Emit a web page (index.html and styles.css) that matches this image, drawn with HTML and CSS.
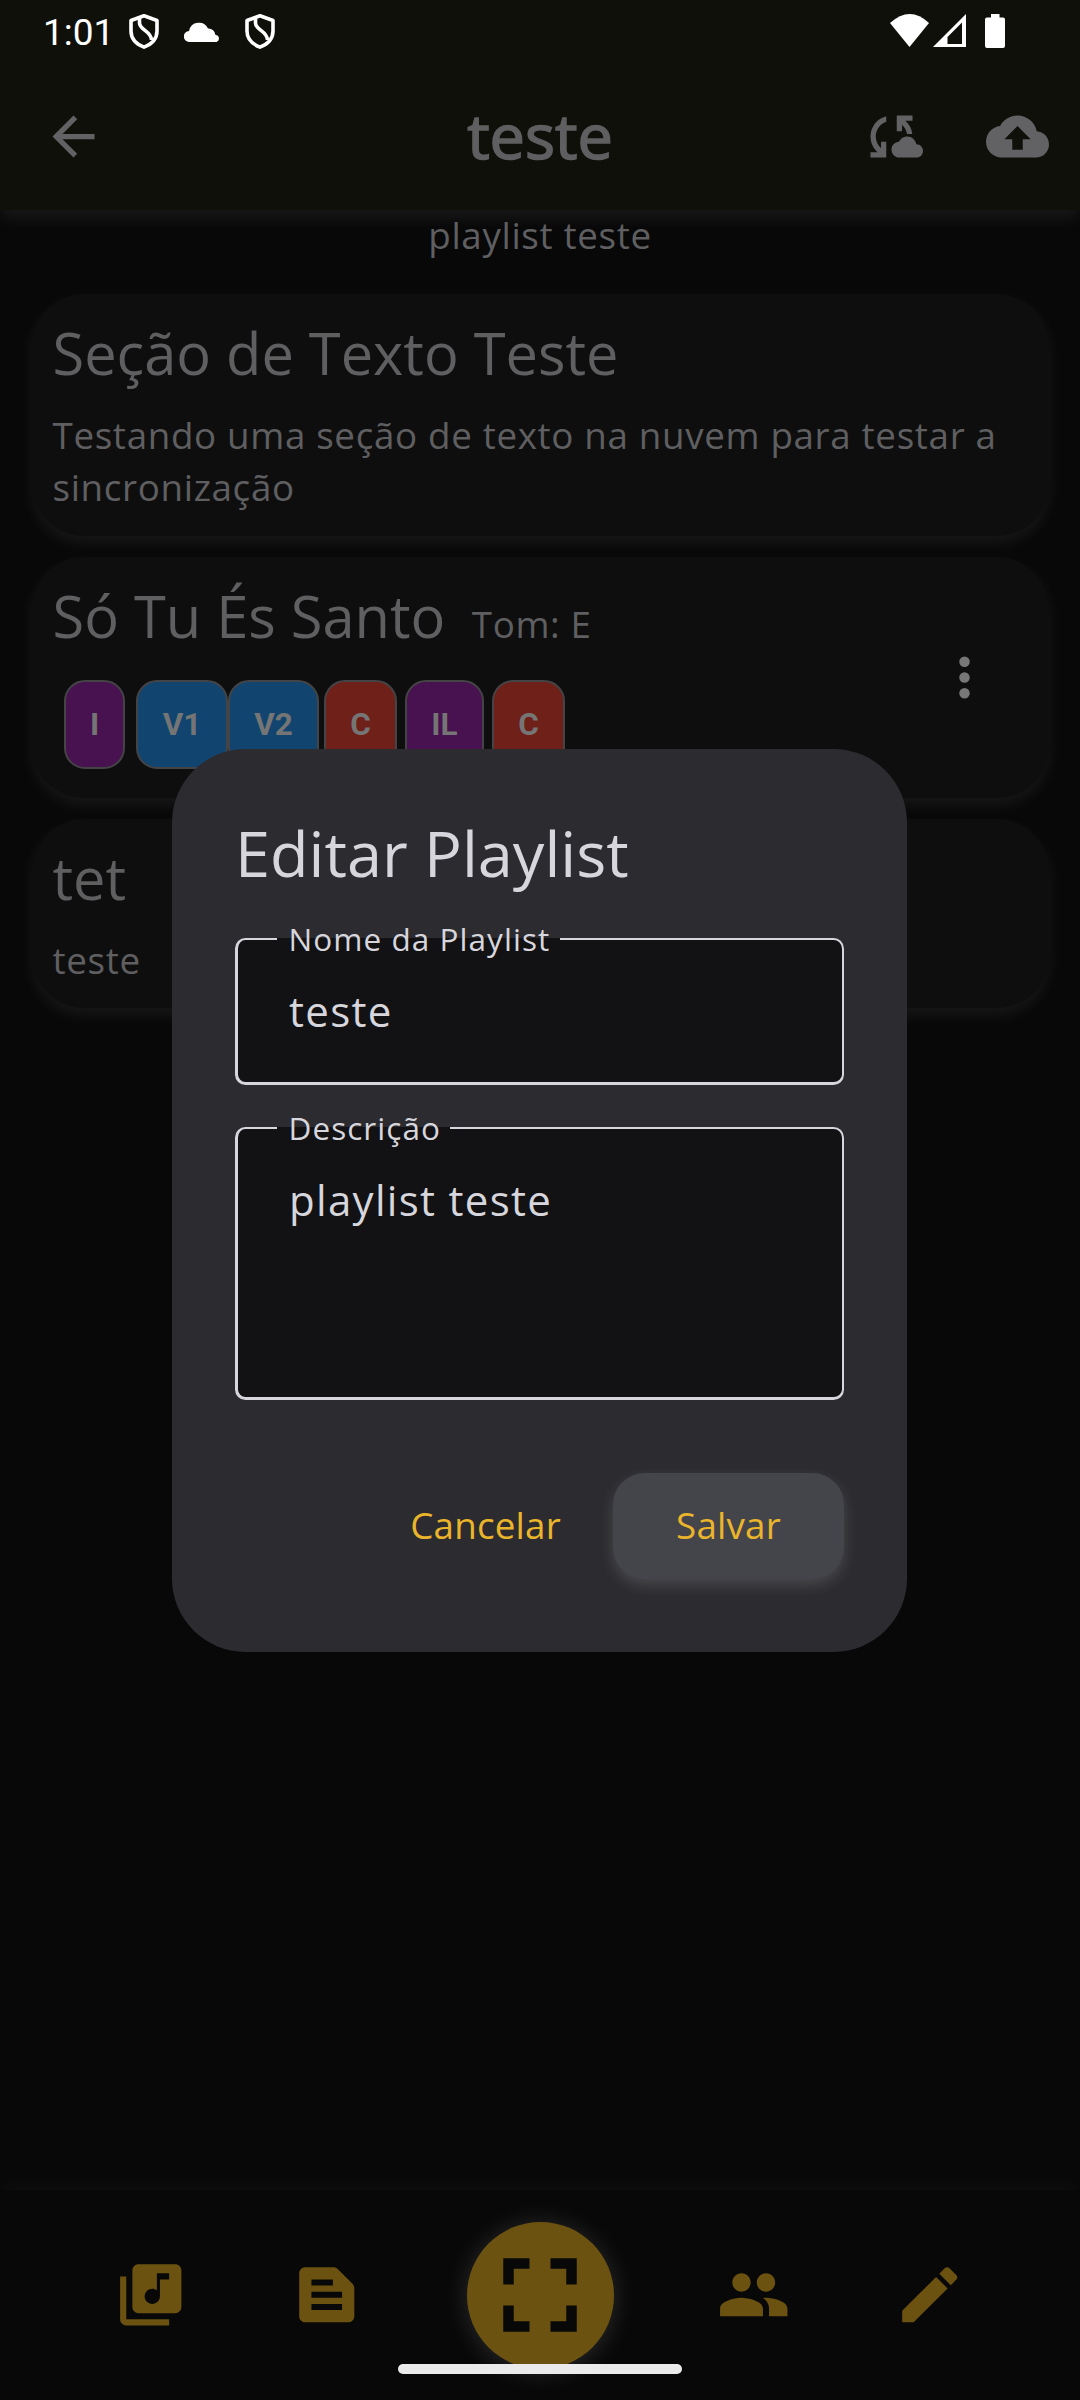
FILE: index.html
```html
<!DOCTYPE html>
<html lang="pt-BR">
<head>
<meta charset="utf-8">
<title>Editar Playlist</title>
<link rel="stylesheet" href="styles.css">
</head>
<body>
<div class="screen">
  <header class="top">
    <div class="status">
      <div class="status-left">
        <span class="clock">1:01</span>
        <svg class="shield" viewBox="0 0 30 35"><path d="M15 1.8 28 6.5V17c0 7.5-5 13-13 16.2C7 30 2 24.500 2 17V6.500z"/><path d="M10.500 4v5c0 7 12 8 12 17"/></svg>
        <svg class="cloud" viewBox="0 0 36 20"><path d="M5.500 20a5.500 5.500 0 0 1-.4-11A10 10 0 0 1 24 6.500a7 7 0 0 1 7.500 6.500A3.600 3.600 0 0 1 32.500 20z"/></svg>
        <svg class="shield" viewBox="0 0 30 35"><path d="M15 1.8 28 6.5V17c0 7.5-5 13-13 16.2C7 30 2 24.500 2 17V6.500z"/><path d="M10.500 4v5c0 7 12 8 12 17"/></svg>
      </div>
      <svg class="status-right" viewBox="0 0 115 34"><path d="M0 9Q20-9 39 9L19.500 33z"/><path fill-rule="evenodd" d="M43 33 76 0v33zM57.500 30H72V8.500L57.500 23z"/><path d="M101 0h8.500v3.500h3.500q2 0 2 2V32q0 2-2 2H97q-2 0-2-2V5.500q0-2 2-2h4z"/></svg>
    </div>
    <div class="appbar">
      <svg class="icon back" viewBox="0 0 24 24"><path d="M20 11H7.830l5.590-5.590L12 4l-8 8 8 8 1.410-1.410L7.830 13H20v-2z"/></svg>
      <h1 class="title">teste</h1>
      <div class="actions">
        <svg class="icon" viewBox="0 0 24 24"><path d="M21.500 14.980c-.02 0-.03 0-.05.01C21.200 13.300 19.760 12 18 12c-1.400 0-2.600.83-3.160 2.020C13.260 14.100 12 15.400 12 17c0 1.660 1.340 3 3 3l6.500-.02c1.380 0 2.500-1.120 2.500-2.500s-1.120-2.500-2.500-2.500zM10 4.260v2.090C7.670 7.180 6 9.390 6 12c0 1.770.78 3.340 2 4.440V14h2v6H4v-2h2.730C5.060 16.540 4 14.400 4 12c0-3.730 2.550-6.850 6-7.740zM20 6h-2.730c1.430 1.260 2.410 3.010 2.660 5h-2.020c-.23-1.360-.93-2.550-1.910-3.440V10h-2V4h6v2z"/></svg>
        <svg class="icon" viewBox="0 0 24 24"><path d="M19.350 10.040C18.670 6.590 15.640 4 12 4 9.110 4 6.600 5.640 5.350 8.040 2.340 8.360 0 10.910 0 14c0 3.310 2.690 6 6 6h13c2.760 0 5-2.240 5-5 0-2.640-2.050-4.780-4.650-4.960zM14 13v4h-4v-4H7l5-5 5 5h-3z"/></svg>
      </div>
    </div>
  </header>

  <main class="content">
    <p class="subtitle">playlist teste</p>
    <section class="card card-text">
      <h2 class="card-title">Seção de Texto Teste</h2>
      <p class="card-body">Testando uma seção de texto na nuvem para testar a sincronização</p>
    </section>
    <section class="card card-song">
      <div class="song">
        <div class="song-head"><h2 class="card-title">Só Tu És Santo</h2><span class="tone">Tom: E</span></div>
        <div class="chips">
          <span class="chip purple chip-i">I</span>
          <span class="chip blue chip-v1">V1</span>
          <span class="chip blue chip-v2">V2</span>
          <span class="chip red chip-c">C</span>
          <span class="chip purple chip-il">IL</span>
          <span class="chip red chip-c">C</span>
        </div>
      </div>
      <svg class="icon more" viewBox="0 0 24 24"><circle cx="12" cy="6" r="2"/><circle cx="12" cy="12" r="2"/><circle cx="12" cy="18" r="2"/></svg>
    </section>
    <section class="card card-note">
      <h2 class="card-title">tet</h2>
      <p class="card-body">teste</p>
    </section>
  </main>

  <nav class="nav">
    <svg class="nav-icon" viewBox="0 0 24 24"><path d="M20 2H8c-1.100 0-2 .9-2 2v12c0 1.100.9 2 2 2h12c1.100 0 2-.9 2-2V4c0-1.100-.9-2-2-2zm-2 5h-3v5.500c0 1.380-1.120 2.500-2.500 2.500S10 13.880 10 12.500s1.120-2.500 2.500-2.500c.57 0 1.080.19 1.500.51V5h4v2zM4 6H2v14c0 1.100.9 2 2 2h14v-2H4V6z"/></svg>
    <svg class="nav-icon" viewBox="0 0 24 24"><path d="M20.410 8.410l-4.830-4.830C15.210 3.210 14.700 3 14.170 3H5c-1.100 0-2 .9-2 2v14c0 1.100.9 2 2 2h14c1.100 0 2-.9 2-2V9.830c0-.53-.21-1.040-.59-1.420zM7 7h7v2H7V7zm10 10H7v-2h10v2zm0-4H7v-2h10v2z"/></svg>
    <div class="fab"><svg class="fab-icon" viewBox="0 0 24 24"><path d="M7 14H5v5h5v-2H7v-3zm-2-4h2V7h3V5H5v5zm12 7h-3v2h5v-5h-2v3zM14 5v2h3v3h2V5h-5z"/></svg></div>
    <svg class="nav-icon" viewBox="0 0 24 24"><path d="M16 11c1.660 0 2.990-1.340 2.990-3S17.660 5 16 5s-3 1.340-3 3 1.340 3 3 3zm-8 0c1.660 0 2.990-1.340 2.990-3S9.660 5 8 5 5 6.340 5 8s1.340 3 3 3zm0 2c-2.330 0-7 1.170-7 3.500V19h14v-2.500c0-2.330-4.670-3.500-7-3.500zm8 0c-.29 0-.62.02-.97.05 1.160.84 1.970 1.970 1.970 3.450V19h6v-2.500c0-2.330-4.670-3.500-7-3.500z"/></svg>
    <svg class="nav-icon" viewBox="0 0 24 24"><path d="M3 17.250V21h3.750L17.810 9.940l-3.750-3.750L3 17.250zM20.710 7.040c.39-.39.39-1.020 0-1.410l-2.340-2.340c-.39-.39-1.020-.39-1.410 0l-1.830 1.830 3.750 3.750 1.830-1.830z"/></svg>
  </nav>

  <div class="overlay">
    <div class="dialog" role="dialog">
      <h2 class="dialog-title">Editar Playlist</h2>
      <div class="field name"><span class="label">Nome da Playlist</span>teste</div>
      <div class="field desc"><span class="label">Descrição</span>playlist teste</div>
      <div class="buttons">
        <span class="button">Cancelar</span>
        <span class="button filled">Salvar</span>
      </div>
    </div>
  </div>
  <div class="home-bar"></div>
</div>
</body>
</html>
```
FILE: styles.css
```css
* { box-sizing: border-box; margin: 0; padding: 0; }

body {
  background: #080808;
  color: #5f5f61;
  font-family: "Open Sans", "Noto Sans", sans-serif;
  font-weight: 400;
}

svg { display: block; flex: none; }

.screen {
  position: relative;
  display: flex;
  flex-direction: column;
  width: 1080px;
  height: 2400px;
  overflow: hidden;
}

/* status bar and app bar */
.top {
  height: 210px;
  background: #10100a;
  box-shadow: 0 8px 16px rgba(255, 255, 255, .07);
}
.status {
  display: flex;
  justify-content: space-between;
  height: 63px;
  padding: 14px 75px 0 43px;
  fill: #fff;
}
.status-left { display: flex; height: 35px; align-items: center; }
.clock {
  width: 86px;
  padding-top: 1px;
  color: #fff;
  font: 37px/35px Roboto, sans-serif;
}
.shield { width: 30px; height: 35px; fill: none; stroke: #fff; stroke-width: 3.6; stroke-linejoin: round; }
.cloud { width: 36px; height: 20px; margin: 0 25px; }
.status-right { width: 115px; height: 34px; }
.appbar {
  display: grid;
  grid-template-columns: 1fr auto 1fr;
  align-items: center;
  height: 147px;
  padding: 0 31.5px;
}
.icon { width: 63px; height: 63px; fill: #626264; }
.back { margin-left: 10.5px; }
.title {
  padding-bottom: 3px;
  font-size: 63px;
  font-weight: 500;
  line-height: 84px;
  -webkit-text-stroke: 1.6px #5f5f61;
}
.actions { display: flex; justify-content: flex-end; gap: 63px; }

/* playlist items */
.content {
  display: flex;
  flex-direction: column;
  flex: 1;
  gap: 21px;
  padding: 0 31.5px;
}
.subtitle {
  height: 63px;
  font-size: 36.75px;
  line-height: 50px;
  letter-spacing: .66px;
  text-align: center;
}
.card {
  padding: 22px 21px 0;
  border-radius: 52px;
  background: #0e0e0e;
  box-shadow: 0 7px 16px rgba(255, 255, 255, .065);
}
.card-text { height: 242px; }
.card-song { display: flex; height: 241px; align-items: flex-start; justify-content: space-between; }
.card-note { height: 189px; }
.card-title { font-size: 57.75px; font-weight: 400; line-height: 73.5px; }
.card-body {
  margin-top: 19.5px;
  font-size: 36.75px;
  line-height: 52px;
  letter-spacing: .66px;
}
.song-head { display: flex; align-items: baseline; gap: 26.5px; }
.tone { font-size: 36.75px; letter-spacing: .66px; }
.chips { display: flex; margin: 27px 0 0 11.5px; }
.chip {
  height: 89px;
  border: 2.6px solid #444446;
  border-radius: 21px;
  color: #757575;
  font: 700 31.5px/86px Roboto, sans-serif;
  text-align: center;
}
.purple { background: #48114f; }
.blue { background: #11456f; }
.red { background: #6f2019; }
.chip-i { width: 61px; margin-right: 11px; }
.chip-v1 { width: 92px; }
.chip-v2 { width: 91px; margin-right: 5px; }
.chip-c { width: 73px; margin-right: 8px; }
.chip-il { width: 79px; margin-right: 8px; }
.more { margin: 67px 32px 0 0; fill: #777; }

/* bottom navigation */
.nav {
  display: flex;
  align-items: center;
  justify-content: center;
  gap: 103px;
  height: 210px;
  background: #080808;
  box-shadow: 0 0 22px rgba(255, 255, 255, .05);
  fill: #6b5211;
}
.nav-icon { width: 73.5px; height: 73.5px; }
.fab {
  display: grid;
  place-items: center;
  width: 147px;
  height: 147px;
  border-radius: 50%;
  background: #6b5211;
  box-shadow: 0 2px 26px rgba(255, 255, 255, .15);
}
.fab-icon { width: 126px; height: 126px; fill: #080808; }

/* dialog */
.overlay { position: absolute; top: 749px; left: 172px; }
.dialog {
  width: 735px;
  height: 903px;
  padding: 61.5px 63px 0;
  border-radius: 73.5px;
  background: #2c2b2f;
  color: #d6d6dc;
}
.dialog-title { margin-bottom: 43.5px; font-size: 63px; font-weight: 400; line-height: 84px; }
.field {
  position: relative;
  padding: 39px 51px 0;
  border: solid #d6d6dc;
  border-width: 2px 2px 3px 3px;
  border-radius: 10.5px;
  background: #121214;
  font-size: 42px;
  line-height: 63px;
  letter-spacing: 1.31px;
}
.name { height: 147px; margin-bottom: 42px; }
.desc { height: 273px; margin-bottom: 73px; }
.label {
  position: absolute;
  top: -22px;
  left: 39px;
  padding: 0 9.5px 0 11.5px;
  background: linear-gradient(#121214, #121214) 0 20px / 100% 2px no-repeat;
  font-size: 31.5px;
  line-height: 42px;
  letter-spacing: 1.05px;
  white-space: nowrap;
}
.buttons { display: flex; justify-content: flex-end; gap: 52px; }
.button {
  height: 106px;
  color: #ebb52b;
  font-size: 36.75px;
  line-height: 105px;
  letter-spacing: .22px;
  text-align: center;
}
.filled {
  width: 231px;
  border-radius: 31.5px;
  background: #44444b;
  box-shadow: 0 6px 15px rgba(255, 255, 255, .14);
}

.home-bar {
  position: absolute;
  top: 2364px;
  left: 398px;
  width: 284px;
  height: 10px;
  border-radius: 5px;
  background: #ebebeb;
}
```
